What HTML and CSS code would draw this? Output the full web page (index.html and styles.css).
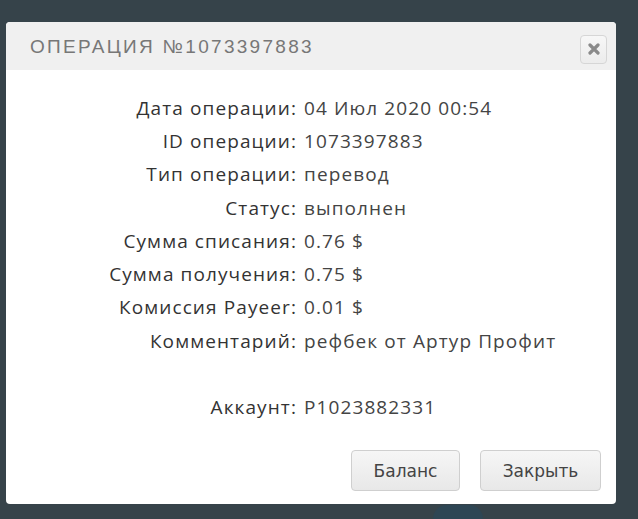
FILE: index.html
```html
<!DOCTYPE html>
<html lang="ru">
<head>
    <meta charset="UTF-8">
    <meta name="viewport" content="width=device-width, initial-scale=1.0">
    <title>Операция №1073397883</title>
    <link rel="stylesheet" href="styles.css">
</head>
<body>
    <div class="backdrop-dot"></div>

    <div class="modal">
        <div class="modal-header">
            <h2 class="modal-title">Операция №1073397883</h2>
            <button class="close-button" aria-label="Закрыть">
                <svg width="12" height="12" viewBox="0 0 12 12">
                    <path d="M2 2 L10 10 M10 2 L2 10" stroke="#8a8a8a" stroke-width="3.2" stroke-linecap="round"/>
                </svg>
            </button>
        </div>

        <div class="modal-body">
            <div class="info-grid">
                <span class="label">Дата операции:</span>
                <span class="value">04 Июл 2020 00:54</span>

                <span class="label">ID операции:</span>
                <span class="value">1073397883</span>

                <span class="label">Тип операции:</span>
                <span class="value">перевод</span>

                <span class="label">Статус:</span>
                <span class="value">выполнен</span>

                <span class="label">Сумма списания:</span>
                <span class="value">0.76 $</span>

                <span class="label">Сумма получения:</span>
                <span class="value">0.75 $</span>

                <span class="label">Комиссия Payeer:</span>
                <span class="value">0.01 $</span>

                <span class="label">Комментарий:</span>
                <span class="value">рефбек от Артур Профит</span>

                <span class="label"></span>
                <span class="value"></span>

                <span class="label">Аккаунт:</span>
                <span class="value">P1023882331</span>
            </div>
        </div>

        <div class="modal-footer">
            <button class="btn btn-balance">Баланс</button>
            <button class="btn btn-close">Закрыть</button>
        </div>
    </div>
</body>
</html>
```

FILE: styles.css
```css
body, html {
    margin: 0;
    padding: 0;
    height: 100%;
    overflow: hidden;
}

body {
    background-color: #36434a;
    font-family: "Open Sans", Arial, sans-serif;
    color: #333;
    padding: 22px 0 0 6px;
    box-sizing: border-box;
    position: relative;
}

.backdrop-dot {
    position: absolute;
    left: 433px;
    top: 505px;
    width: 50px;
    height: 14px;
    border-radius: 25px 25px 0 0;
    background-color: #2e4654;
}

.modal {
    position: relative;
    width: 610px;
    height: 482px;
    background-color: #fff;
    border-radius: 4px;
    display: flex;
    flex-direction: column;
    overflow: hidden;
}

.modal-header {
    height: 48px;
    background-color: #f0f0f0;
    display: flex;
    align-items: center;
    justify-content: space-between;
    padding: 0 9px 0 24px;
}

.modal-title {
    margin: 0;
    font-family: "Liberation Sans", Arial, sans-serif;
    font-weight: normal;
    font-size: 19px;
    letter-spacing: 2.3px;
    text-transform: uppercase;
    color: #777;
    padding-top: 2px;
}

.close-button {
    width: 27px;
    height: 29px;
    margin-top: 6px;
    padding: 0;
    border: 1px solid #d6d6d6;
    border-radius: 4px;
    background: linear-gradient(#f7f7f7, #ececec);
    display: flex;
    align-items: center;
    justify-content: center;
    cursor: pointer;
}

.modal-body {
    padding-top: 21px;
}

.info-grid {
    display: grid;
    grid-template-columns: 291px 1fr;
    column-gap: 7px;
    grid-auto-rows: 33.3px;
    align-items: center;
    font-size: 19px;
    letter-spacing: 1.1px;
}

.label {
    text-align: right;
    color: #333;
}

.value {
    color: #444;
}

.modal-footer {
    margin-top: auto;
    display: flex;
    justify-content: flex-end;
    gap: 20px;
    padding: 0 15px 13px 0;
}

.btn {
    height: 41px;
    padding: 0;
    border: 1px solid #cfcfcf;
    border-radius: 4px;
    background: linear-gradient(#f6f6f6, #e8e8e8);
    font-family: "DejaVu Sans", Verdana, sans-serif;
    font-size: 17px;
    color: #444;
    cursor: pointer;
}

.btn-balance {
    width: 109px;
}

.btn-close {
    width: 121px;
}
```
